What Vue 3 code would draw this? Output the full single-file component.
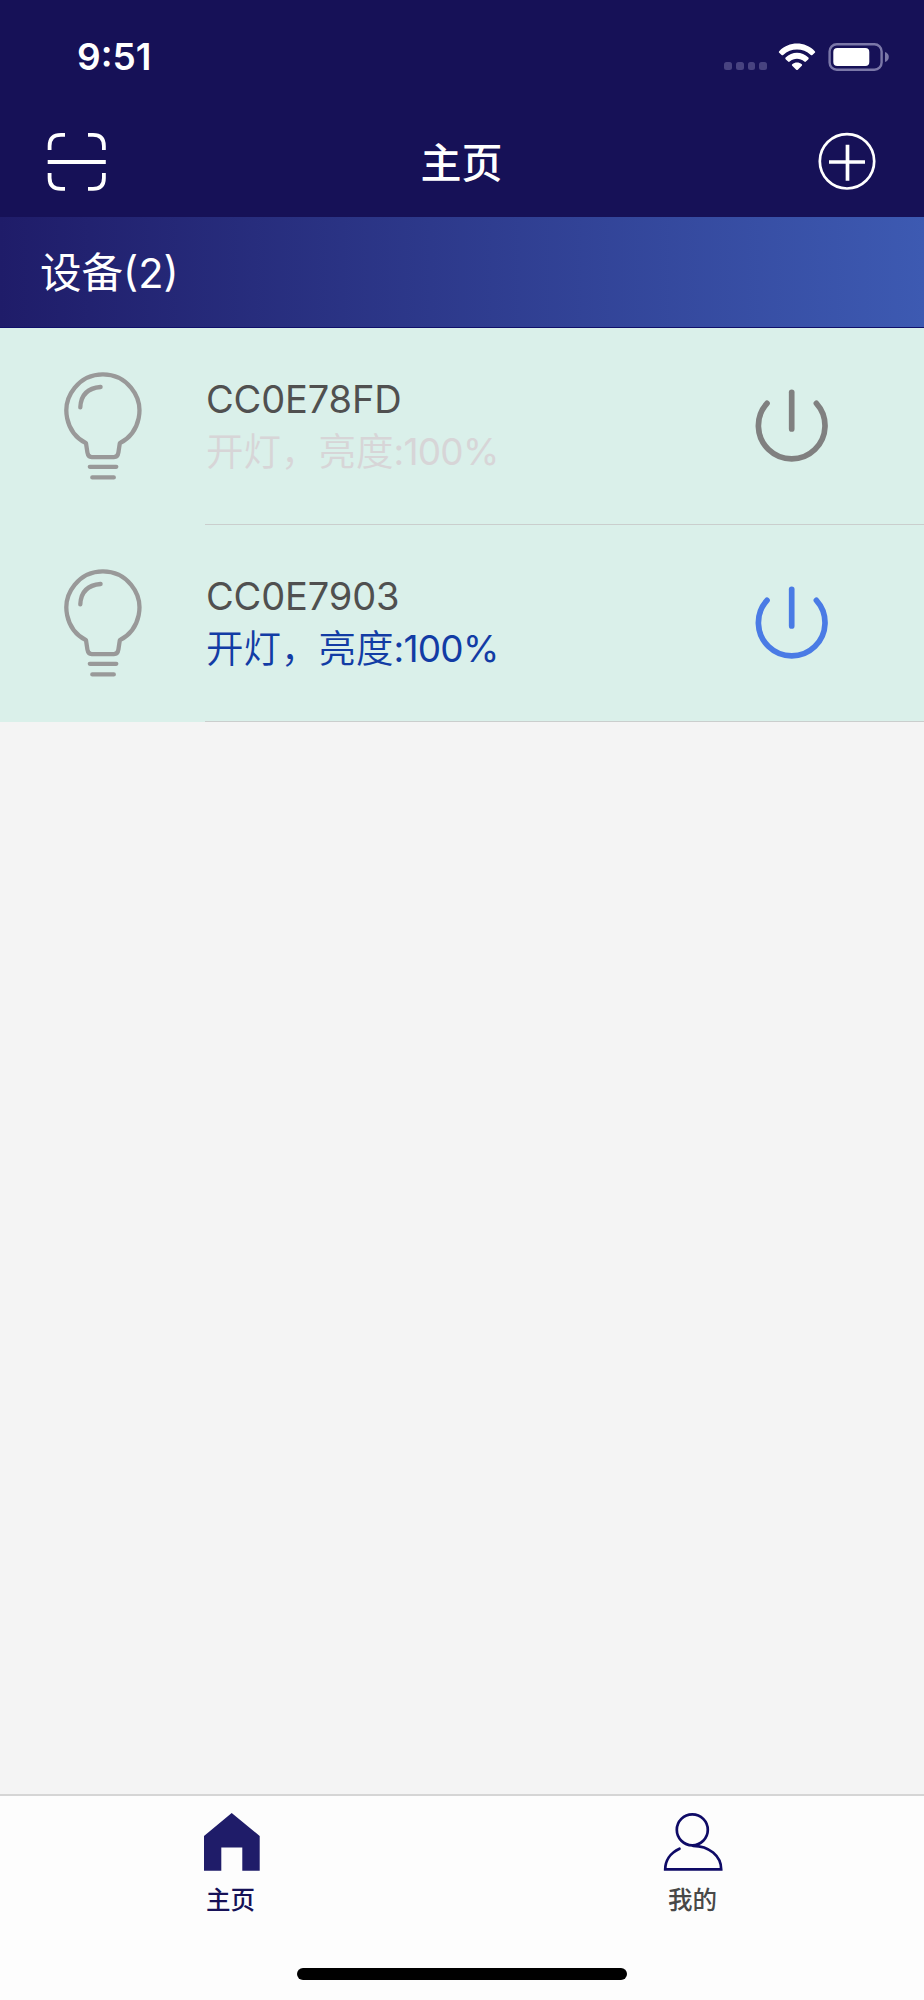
<template>
  <div class="page">
    <header class="header">
      <div class="status-bar">
        <span class="time">9:51</span>
        <div class="status-icons">
          <div class="signal">
            <i v-for="n in 4" :key="n"></i>
          </div>
          <svg class="wifi" width="38" height="28" viewBox="0 0 38 28">
            <path d="M1.2 8.2 C11 -2 27 -2 36.8 8.2 Q37.6 9 36.8 9.8 L34.4 12 Q33.6 12.7 32.8 12 C25 4.7 13 4.7 5.2 12 Q4.4 12.7 3.6 12 L1.2 9.8 Q0.4 9 1.2 8.2Z" />
            <path d="M7.6 14.6 C14 8.2 24 8.2 30.4 14.6 Q31.1 15.4 30.4 16.2 L27.9 18.6 Q27.1 19.3 26.3 18.6 C22 14.9 16 14.9 11.7 18.6 Q10.9 19.3 10.1 18.6 L7.6 16.2 Q6.9 15.4 7.6 14.6Z" />
            <path d="M14.2 21.2 C17 18.8 21 18.8 23.8 21.2 Q24.6 22 23.8 22.7 L19.8 26.7 Q19 27.4 18.2 26.7 L14.2 22.7 Q13.4 22 14.2 21.2Z" />
          </svg>
          <svg class="battery" width="62" height="28" viewBox="0 0 62 28">
            <rect x="1.6" y="1.3" width="52" height="25.4" rx="7.2" fill="none" stroke="#7b78a8" stroke-width="2.4" />
            <rect x="5.3" y="5" width="36" height="18" rx="4" fill="#fff" />
            <path d="M57 9 Q60.8 10.4 60.8 14 T57 19Z" fill="#7b78a8" />
          </svg>
        </div>
      </div>
      <div class="nav-bar">
        <svg class="nav-icon" width="60" height="60" viewBox="0 0 60 60" fill="none" stroke="#fff" stroke-width="3.8">
          <path d="M2.6 18 V14 Q2.6 2.9 14 2.9 H18" />
          <path d="M41 2.9 H46 Q56.9 2.9 56.9 14 V18" />
          <path d="M2.6 41 V46 Q2.6 56.9 14 56.9 H18" />
          <path d="M41 56.9 H46 Q56.9 56.9 56.9 46 V41" />
          <path d="M0.7 30 H58.8" />
        </svg>
        <h1 class="title">主页</h1>
        <svg class="nav-icon" width="60" height="60" viewBox="0 0 60 60" fill="none" stroke="#fff">
          <circle cx="30" cy="29.3" r="27.2" stroke-width="2.7" />
          <path d="M12 30 H48 M30.5 12.7 V48.7" stroke-width="3.7" />
        </svg>
      </div>
    </header>

    <div class="section-head">设备({{ devices.length }})</div>

    <ul class="devices">
      <li v-for="device in devices" :key="device.name" class="device">
        <svg class="bulb" width="81" height="111" viewBox="62 370 81 111" fill="none" stroke="#999" stroke-width="4.3" stroke-linecap="round" stroke-linejoin="round">
          <path d="M86 442.2 A36.5 36.5 0 1 1 119.8 442.2 L118.4 451.5 Q117.7 456.2 114 456.2 H91.7 Q88.2 456.2 87.4 451.5 Z" />
          <path d="M80.3 406.3 Q81.2 387.5 100.6 386" />
          <path d="M89.8 465.8 H116.3 M92.3 476.4 H113.8" />
        </svg>
        <div class="device-body">
          <div class="info">
            <div class="name">{{ device.name }}</div>
            <div class="state" :class="{ on: device.online }">开灯，亮度<span>:{{ device.brightness }}%</span></div>
          </div>
          <svg class="power" :class="{ on: device.online }" width="76" height="76" viewBox="754 388 76 76">
            <path d="M767 403.3 A33.3 33.3 0 1 0 816.4 403.3" />
            <path d="M791.7 392.3 V429" />
          </svg>
        </div>
      </li>
    </ul>

    <nav class="tab-bar">
      <div class="tabs">
        <div class="tab active">
          <svg width="60" height="60" viewBox="201 1811 60 60" fill="#1f1c69">
            <path d="M231.7 1813 L259.7 1836 V1870.7 H242.3 V1847.5 H221.3 V1870.7 H204 V1836Z" />
          </svg>
          <span>主页</span>
        </div>
        <div class="tab">
          <svg width="60" height="60" viewBox="663 1811 60 60" fill="none" stroke="#0e0a66" stroke-width="2.7">
            <circle cx="692.3" cy="1829.8" r="15.5" />
            <path d="M679.5 1848.7 C670 1853 665.2 1861 665.2 1869.4 H721.2 C721.2 1856 709 1845.8 693 1845.8" stroke-linecap="round" />
          </svg>
          <span>我的</span>
        </div>
      </div>
      <div class="home-indicator"></div>
    </nav>
  </div>
</template>

<script setup>
import { ref } from 'vue'

const devices = ref([
  { name: 'CC0E78FD', brightness: 100, online: false },
  { name: 'CC0E7903', brightness: 100, online: true }
])
</script>

<style>
body {
  margin: 0;
  background: #f4f4f4;
}
</style>

<style scoped>
.page {
  display: flex;
  flex-direction: column;
  width: 924px;
  height: 2000px;
  overflow: hidden;
  background: #f4f4f4;
  font-family: Inter, "Noto Sans CJK SC", sans-serif;
}

svg {
  display: block;
  flex-shrink: 0;
}

.header {
  height: 217px;
  background: #161157;
  color: #fff;
}

.status-bar {
  display: flex;
  justify-content: space-between;
  align-items: center;
  height: 113px;
  padding: 0 34px 1px 77px;
}

.time {
  font-size: 37px;
  font-weight: 600;
}

.status-icons {
  display: flex;
  align-items: center;
}

.signal {
  display: flex;
  gap: 4px;
  margin: 18px 11px 0 0;
}

.signal i {
  width: 7.7px;
  height: 8px;
  border-radius: 2.5px;
  background: #484380;
}

.wifi {
  margin-right: 12px;
  fill: #fff;
}

.nav-bar {
  display: flex;
  justify-content: space-between;
  align-items: center;
  height: 96px;
  padding: 0 47px;
}

.title {
  margin: 0;
  padding: 2px 1px 0 0;
  font-size: 41px;
  font-weight: 500;
  line-height: 60px;
}

.section-head {
  box-sizing: border-box;
  height: 111px;
  padding-left: 40px;
  border-bottom: 1px solid #10106a;
  background: linear-gradient(90deg, #1f1c69, #3d5ab2);
  color: #fff;
  font-size: 41.5px;
  font-weight: 400;
  line-height: 112px;
}

.devices {
  flex: 1;
  margin: 0;
  padding: 0;
  list-style: none;
}

.device {
  display: flex;
  align-items: center;
  height: 197px;
  background: #daf0ea;
}

.bulb {
  margin: 0 62px 0 62px;
}

.device-body {
  box-sizing: border-box;
  display: flex;
  flex: 1;
  justify-content: space-between;
  align-items: center;
  height: 100%;
  padding-right: 94px;
  border-bottom: 1px solid #cacecd;
}

.info {
  padding: 1px 0 0 1px;
}

.name {
  color: #505050;
  font-size: 38px;
  letter-spacing: -0.15px;
  line-height: 51px;
}

.state {
  color: #d7d5d7;
  font-size: 37.5px;
  font-weight: 350;
  line-height: 54px;
}

.state span {
  font-size: 37px;
  font-weight: 400;
  letter-spacing: -0.75px;
}

.state.on {
  color: #123ca5;
}

.power {
  fill: none;
  stroke: #808080;
  stroke-width: 5.7;
  stroke-linecap: round;
}

.power.on {
  stroke: #4a7be5;
}

.tab-bar {
  box-sizing: border-box;
  height: 206px;
  border-top: 2px solid #d5d5d5;
  background: #fdfdfd;
}

.tabs {
  display: flex;
  height: 172px;
}

.tab {
  display: flex;
  flex: 1;
  flex-direction: column;
  align-items: center;
  padding-top: 15px;
  color: #484848;
  font-size: 24.5px;
  font-weight: 500;
  line-height: 36px;
}

.tab span {
  margin: 11px 1px 0 0;
}

.tab.active {
  color: #161157;
}

.home-indicator {
  width: 330px;
  height: 12px;
  margin: 0 auto;
  border-radius: 6px;
  background: #000;
}
</style>
